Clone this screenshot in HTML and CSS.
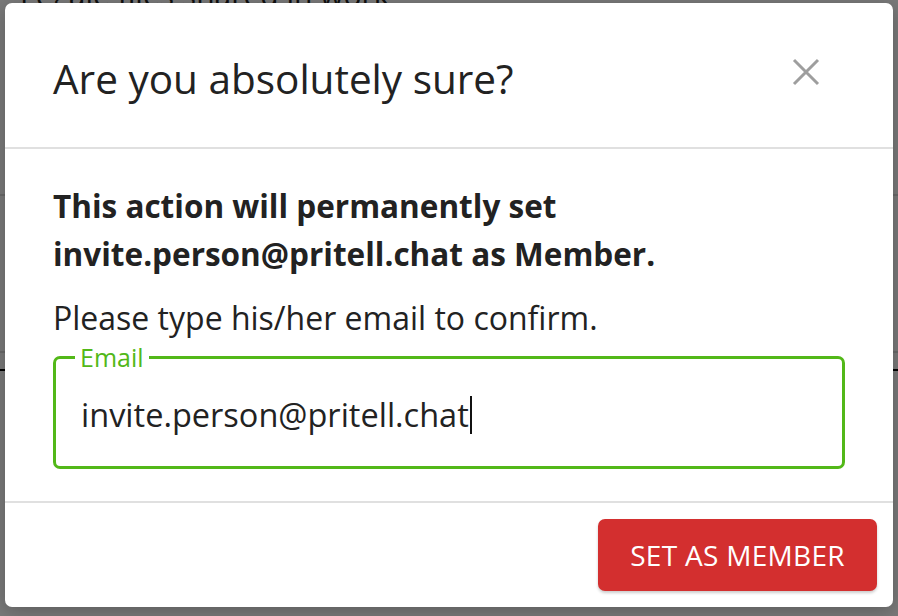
FILE: index.html
```html
<!DOCTYPE html>
<html lang="en">
<head>
  <meta charset="UTF-8">
  <title>Members - Confirm role change</title>
  <link rel="stylesheet" href="styles.css">
</head>
<body>

  <!-- 1) PAGE BEHIND THE DIALOG -->
  <div class="page">
    <div class="page-title">Legale files shared in work</div>
    <div class="page-rule rule-a"></div>
    <div class="page-rule rule-b"></div>
    <div class="page-rule rule-c"></div>
  </div>

  <!-- 2) BACKDROP + DIALOG -->
  <div class="backdrop">
    <div class="dialog">
      <div class="dialog-header">
        <h2 class="dialog-title">Are you absolutely sure?</h2>
        <button class="close-btn" aria-label="Close">
          <svg width="28" height="28" viewBox="0 0 28 28">
            <path d="M2 2 L26 26 M26 2 L2 26" stroke="#9e9e9e" stroke-width="3" fill="none"/>
          </svg>
        </button>
      </div>

      <div class="dialog-body">
        <p class="warning">This action will permanently set invite.person@pritell.chat as Member.</p>
        <p class="hint">Please type his/her email to confirm.</p>
        <fieldset class="field">
          <legend class="field-label">Email</legend>
          <div class="field-input">invite.person@pritell.chat<span class="caret"></span></div>
        </fieldset>
      </div>

      <div class="dialog-footer">
        <button class="danger-btn">SET AS MEMBER</button>
      </div>
    </div>
  </div>

</body>
</html>
```

FILE: styles.css
```css
/********************************************************
 * 1) PAGE
 ********************************************************/
html, body {
  margin: 0;
  padding: 0;
  height: 100%;
  overflow: hidden;
  background: #fff;
  font-family: "Open Sans", "Noto Sans", sans-serif;
  color: #222;
  position: relative;
}

.page {
  height: 100%;
}

.page-title {
  font-size: 30px;
  padding-left: 20px;
  margin-top: -26px;
  color: #222;
}

/* table lines of the page, only their ends peek out at the right */
.page-rule {
  position: absolute;
  left: 0;
  right: 0;
  height: 2px;
  background: #ddd;
}
.rule-a { top: 194px; }
.rule-b { top: 351px; }
.rule-c { top: 369px; background: #000; }

/********************************************************
 * 2) BACKDROP & DIALOG
 ********************************************************/
.backdrop {
  position: absolute;
  inset: 0;
  background: rgba(0, 0, 0, 0.52);
  padding: 3px 5px 9px 5px;
  box-sizing: border-box;
  display: flex;
}

.dialog {
  flex: 1;
  background: #fff;
  border-radius: 7px;
  display: flex;
  flex-direction: column;
  box-shadow: 0 4px 20px rgba(0, 0, 0, 0.25);
}

.dialog-header {
  height: 144px;
  display: flex;
  align-items: center;
  justify-content: space-between;
  padding: 0 73px 0 48px;
  border-bottom: 2px solid #e0e0e0;
}

.dialog-title {
  margin: 0;
  font-size: 40.5px;
  font-weight: 400;
  color: #222;
  padding-top: 6px;
}

.close-btn {
  border: none;
  background: none;
  padding: 0;
  width: 28px;
  height: 28px;
  margin-top: -7px;
}

.dialog-body {
  height: 354px;
  padding: 33px 48px 0 48px;
  box-sizing: border-box;
  border-bottom: 2px solid #e0e0e0;
}

.warning {
  margin: 0;
  font-size: 31.5px;
  font-weight: 700;
  line-height: 48px;
  max-width: 700px;
}

.hint {
  margin: 20px 0 0;
  font-size: 32px;
  line-height: 40px;
}

.field {
  margin: 9px 0 0;
  border: 3px solid #52b818;
  border-radius: 7px;
  padding: 0 25px;
  height: 122px;
  box-sizing: border-box;
}

.field-label {
  color: #52b818;
  font-size: 25px;
  padding: 0 5px;
  margin-left: -6px;
  line-height: 20px;
}

.field-input {
  font-size: 32.5px;
  color: #222;
  margin-top: 25px;
  display: flex;
  align-items: center;
}

.caret {
  display: inline-block;
  width: 2px;
  height: 38px;
  background: #111;
  margin-left: 1px;
}

/********************************************************
 * 3) FOOTER
 ********************************************************/
.dialog-footer {
  flex: 1;
  display: flex;
  justify-content: flex-end;
  align-items: flex-start;
  padding: 16px 16px 0 0;
}

.danger-btn {
  width: 279px;
  height: 72px;
  border: none;
  border-radius: 7px;
  background: #d32f2f;
  color: #fff;
  font-family: inherit;
  font-size: 28px;
  letter-spacing: 0.3px;
  box-shadow: 0 2px 3px rgba(0, 0, 0, 0.2);
}
```
